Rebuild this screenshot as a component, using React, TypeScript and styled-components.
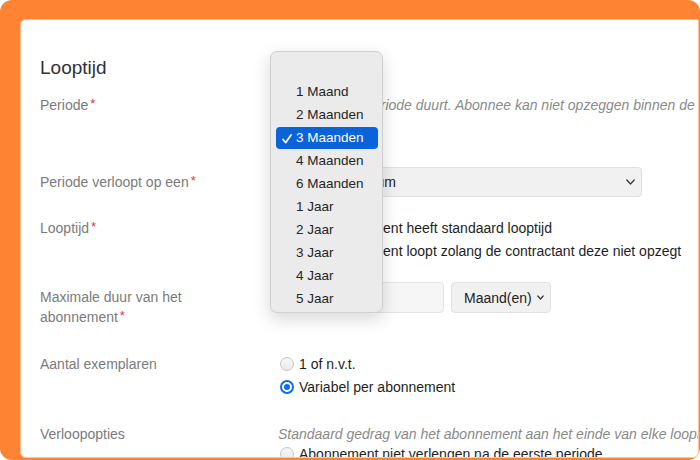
import React from "react";
import styled, { createGlobalStyle } from "styled-components";

const Global = createGlobalStyle`
  html, body { margin: 0; padding: 0; background: #ffffff; }
  body { font-family: "Liberation Sans", Helvetica, Arial, sans-serif; }
  * { box-sizing: border-box; }
`;

const Frame = styled.div`
  position: relative;
  width: 700px;
  height: 460px;
  background: #fe8332;
  border-radius: 12px;
  padding: 19px 1px 2px 20px;
  overflow: hidden;
`;

const Card = styled.div`
  width: 100%;
  height: 100%;
  background: #ffffff;
  border: 1px solid #ffc29a;
  border-radius: 6px 2px 6px 6px;
  padding: 37px 0 0 19px;
  overflow: hidden;
`;

const Title = styled.h2`
  margin: 0;
  font-size: 19px;
  line-height: 22px;
  font-weight: 400;
  color: #30313a;
`;

const Row = styled.div<{ $mt: number }>`
  display: grid;
  grid-template-columns: 238px 1fr;
  margin-top: ${(p) => p.$mt}px;
  font-size: 14px;
  line-height: 20px;
`;

const Label = styled.div<{ $pt?: number }>`
  color: #7b7b7b;
  padding-top: ${(p) => p.$pt ?? 0}px;
  width: 160px;
`;

const Req = styled.span`
  color: #e8334f;
  margin-left: 2px;
  font-size: 13px;
  position: relative;
  top: -2px;
`;

const Value = styled.div`
  display: flex;
  flex-direction: column;
  min-width: 0;
`;

const Hint = styled.div`
  font-style: italic;
  color: #8a8a8a;
  white-space: nowrap;
`;

const SelectBox = styled.div<{ $w: number; $h?: number; $pl?: number; $mt?: number }>`
  width: ${(p) => p.$w}px;
  height: ${(p) => p.$h ?? 30}px;
  margin-top: ${(p) => p.$mt ?? 0}px;
  display: flex;
  align-items: center;
  justify-content: space-between;
  padding: 0 6px 0 ${(p) => p.$pl ?? 12}px;
  background: #f1f1f1;
  border: 1px solid #e0e0e0;
  border-radius: 4px;
  color: #222;
  font-size: 14px;
  white-space: nowrap;
`;

const InputBox = styled.div`
  width: 166px;
  height: 31px;
  background: #f6f6f6;
  border: 1px solid #e4e4e4;
  border-radius: 4px;
`;

const Inline = styled.div`
  display: flex;
  gap: 7px;
`;

const RadioList = styled.div`
  display: flex;
  flex-direction: column;
  gap: 3px;
`;

const RadioRow = styled.label`
  display: flex;
  align-items: center;
  gap: 5px;
  color: #1e1e1e;
  white-space: nowrap;
  padding-left: 2px;
`;

const RadioDot = styled.span<{ $on?: boolean }>`
  width: 14px;
  height: 14px;
  flex: none;
  border-radius: 50%;
  background: ${(p) => (p.$on ? "#ffffff" : "linear-gradient(#f6f6f6, #ebebeb)")};
  border: ${(p) => (p.$on ? "2px solid #0a6cf5" : "1px solid #c6c6c6")};
  display: flex;
  align-items: center;
  justify-content: center;
  &::after {
    content: "";
    display: ${(p) => (p.$on ? "block" : "none")};
    width: 6px;
    height: 6px;
    border-radius: 50%;
    background: #0a6cf5;
  }
`;

const Chevron = ({ w = 9, h = 5 }: { w?: number; h?: number }) => (
  <svg width={w} height={h + 2} viewBox={`0 0 ${w} ${h + 2}`}>
    <polyline
      points={`0.8,1 ${w / 2},${h} ${w - 0.8},1`}
      fill="none"
      stroke="#333"
      strokeWidth="1.2"
      strokeLinecap="round"
      strokeLinejoin="round"
    />
  </svg>
);

const Menu = styled.div`
  position: absolute;
  left: 270px;
  top: 51px;
  width: 113px;
  height: 262px;
  background: #ebebeb;
  border: 1px solid #cfcfcf;
  border-radius: 7px;
  box-shadow: 0 6px 18px rgba(0, 0, 0, 0.16);
  padding: 29px 4px 0 5px;
  display: flex;
  flex-direction: column;
  gap: 1px;
  font-family: "Liberation Sans", Helvetica, Arial, sans-serif;
`;

const MenuItem = styled.div<{ $sel?: boolean }>`
  position: relative;
  height: 22px;
  line-height: 22px;
  padding-left: 20px;
  font-size: 13.5px;
  border-radius: 4px;
  color: ${(p) => (p.$sel ? "#ffffff" : "#252525")};
  background: ${(p) => (p.$sel ? "#0a63d8" : "transparent")};
  white-space: nowrap;
`;

const Check = styled.svg`
  position: absolute;
  left: 6px;
  top: 7px;
`;

const options = [
  "1 Maand",
  "2 Maanden",
  "3 Maanden",
  "4 Maanden",
  "6 Maanden",
  "1 Jaar",
  "2 Jaar",
  "3 Jaar",
  "4 Jaar",
  "5 Jaar",
];

export default function App() {
  return (
    <>
      <Global />
      <Frame>
        <Card>
          <Title>Looptijd</Title>

          <Row $mt={16}>
            <Label>
              Periode<Req>*</Req>
            </Label>
            <Value>
              <Hint>Hoe lang een periode duurt. Abonnee kan niet opzeggen binnen de periode.</Hint>
              <SelectBox $w={100} $mt={7}>
                3 Maanden
                <Chevron />
              </SelectBox>
            </Value>
          </Row>

          <Row $mt={15}>
            <Label $pt={5}>
              Periode verloopt op een<Req>*</Req>
            </Label>
            <Value>
              <SelectBox $w={364} $pl={22}>
                Kalenderdatum
                <Chevron />
              </SelectBox>
            </Value>
          </Row>

          <Row $mt={21}>
            <Label>
              Looptijd<Req>*</Req>
            </Label>
            <RadioList>
              <RadioRow>
                <RadioDot $on />
                Het abonnement heeft standaard looptijd
              </RadioRow>
              <RadioRow>
                <RadioDot />
                Het abonnement loopt zolang de contractant deze niet opzegt
              </RadioRow>
            </RadioList>
          </Row>

          <Row $mt={21}>
            <Label $pt={5}>
              Maximale duur van het abonnement<Req>*</Req>
            </Label>
            <Inline>
              <InputBox />
              <SelectBox $w={100} $h={31} $pl={12}>
                Maand(en)
                <Chevron w={7} h={4} />
              </SelectBox>
            </Inline>
          </Row>

          <Row $mt={26}>
            <Label>Aantal exemplaren</Label>
            <RadioList>
              <RadioRow>
                <RadioDot />1 of n.v.t.
              </RadioRow>
              <RadioRow>
                <RadioDot $on />
                Variabel per abonnement
              </RadioRow>
            </RadioList>
          </Row>

          <Row $mt={27}>
            <Label>Verloopopties</Label>
            <Value>
              <Hint>Standaard gedrag van het abonnement aan het einde van elke looptijd.</Hint>
              <RadioRow>
                <RadioDot />
                Abonnement niet verlengen na de eerste periode
              </RadioRow>
            </Value>
          </Row>
        </Card>

        <Menu>
          {options.map((o) => (
            <MenuItem key={o} $sel={o === "3 Maanden"}>
              {o === "3 Maanden" && (
                <Check width="10" height="10" viewBox="0 0 10 10">
                  <polyline
                    points="1,5.5 3.8,8.6 9,1"
                    fill="none"
                    stroke="#fff"
                    strokeWidth="1.7"
                    strokeLinecap="round"
                    strokeLinejoin="round"
                  />
                </Check>
              )}
              {o}
            </MenuItem>
          ))}
        </Menu>
      </Frame>
    </>
  );
}
